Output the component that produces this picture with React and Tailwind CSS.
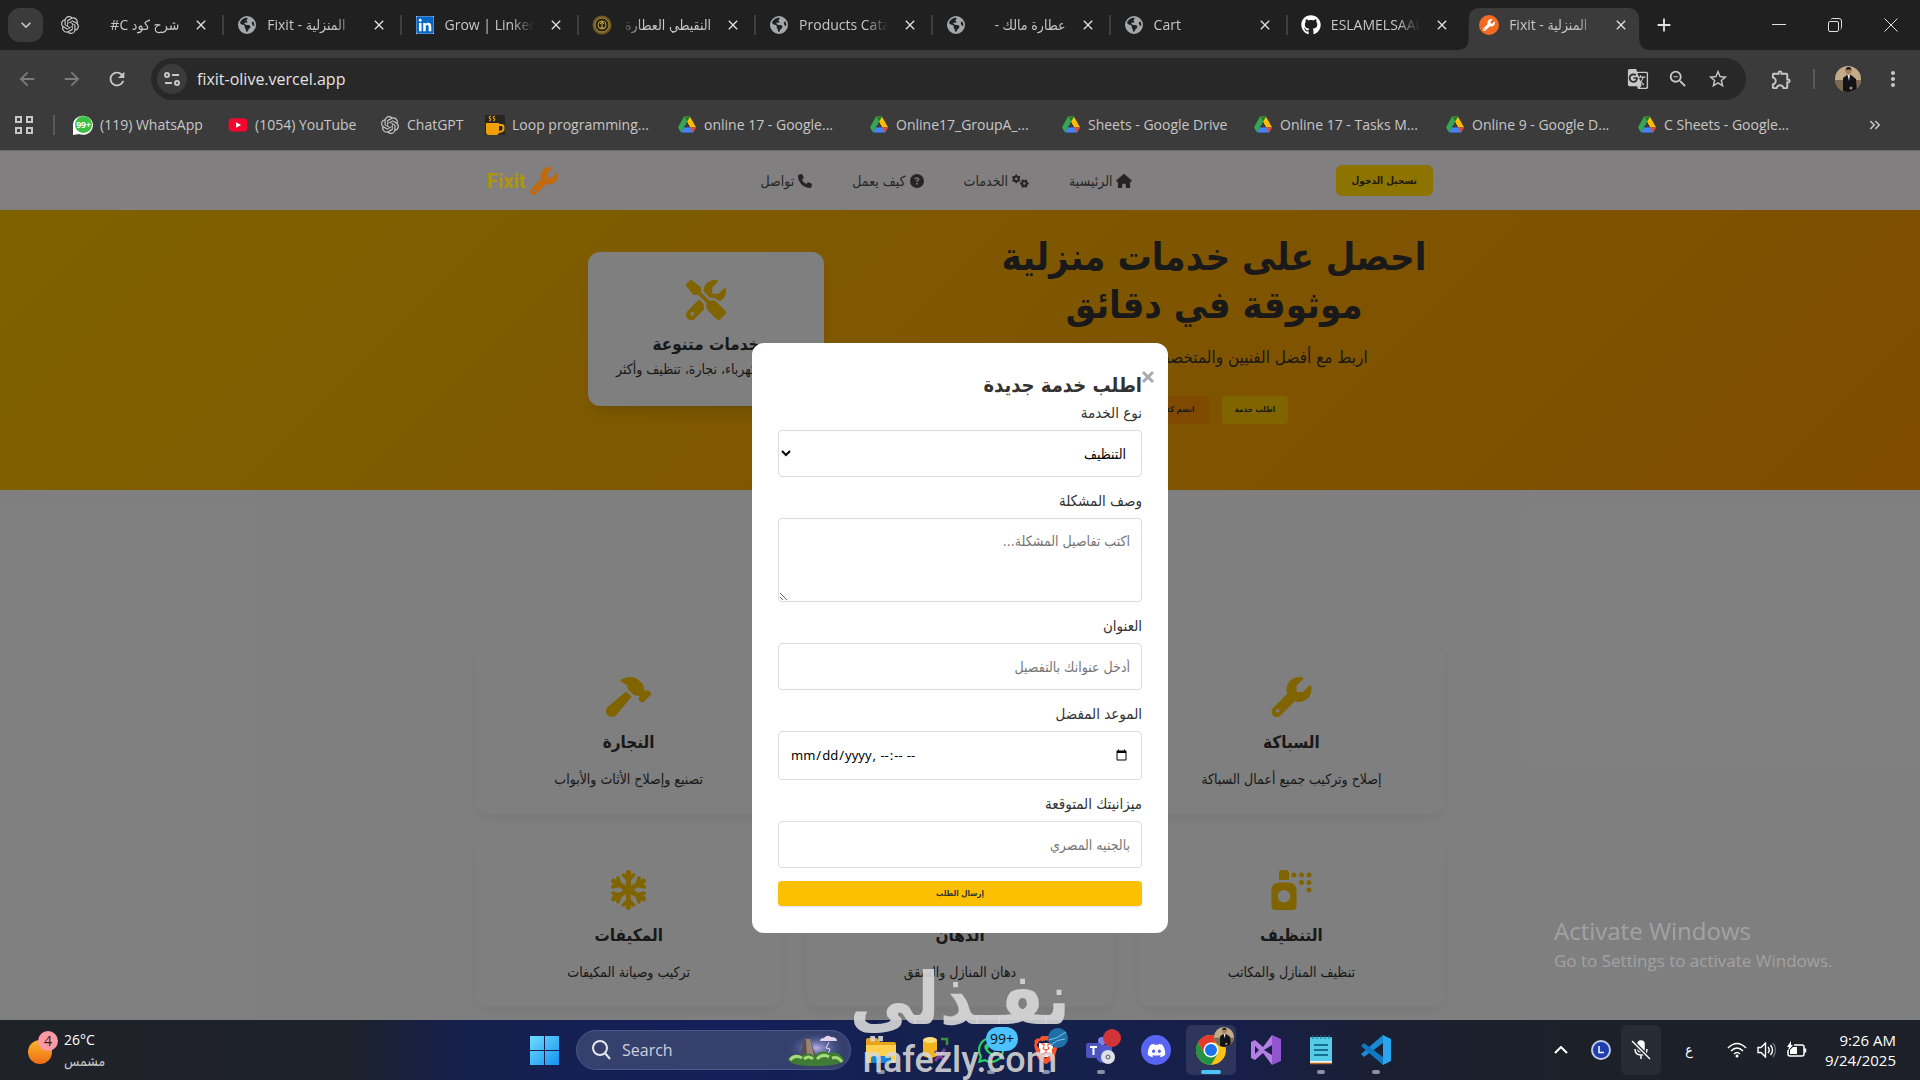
import React from 'react'
import {
    FaWrench,
    FaHammer,
    FaSnowflake,
    FaSprayCan,
    FaPaintRoller,
    FaBolt,
    FaScrewdriverWrench,
    FaPhone,
    FaCircleQuestion,
    FaGears,
    FaHouse,
    FaGithub,
    FaEarthAmericas,
    FaLinkedin,
    FaWhatsapp,
    FaDiscord,
    FaYoutube,
} from 'react-icons/fa6'
import { SiOpenai, SiBrave } from 'react-icons/si'
import {
    MdGTranslate,
    MdZoomOut,
    MdStarBorder,
    MdOutlineExtension,
    MdMoreVert,
    MdArrowBack,
    MdArrowForward,
    MdRefresh,
    MdClose,
    MdAdd,
    MdExpandMore,
    MdKeyboardDoubleArrowRight,
} from 'react-icons/md'

const uiFont = "font-['Open_Sans','DejaVu_Sans_Condensed','DejaVu_Sans',sans-serif]"
const pageFont = "font-['DejaVu_Sans_Condensed','DejaVu_Sans',sans-serif]"

function DriveIcon() {
    return (
        <svg viewBox="0 0 24 22" className="h-[18px] w-[18px]">
            <path d="M8 0h8L8.500 13.500 4 21 0 14z" fill="#34a853" />
            <path d="M8 0h8l8 14h-8z" fill="#fbbc04" />
            <path d="M8 0h8l-4 7z" fill="#188038" />
            <path d="M4.500 21 8 14h16l-4 7z" fill="#4285f4" />
            <path d="M16 14h8l-4 7z" fill="#ea4335" />
            <path d="m12 7 4 7H8z" fill="#3c3b3c" />
        </svg>
    )
}

function GoldIcon() {
    return (
        <svg viewBox="0 0 20 20" className="h-5 w-5">
            <circle cx="10" cy="10" r="9.500" fill="#6e5a22" />
            <circle cx="10" cy="10" r="7" fill="#2b2510" stroke="#a58a3c" />
            <circle cx="10" cy="10" r="4" fill="none" stroke="#b99b45" />
            <path d="M10 6v7M8 9l2-2 2 2M7.500 13h5" stroke="#c9aa50" fill="none" />
        </svg>
    )
}

function LoopIcon() {
    return (
        <svg viewBox="0 0 20 20" className="h-5 w-5">
            <rect width="20" height="20" fill="#262523" />
            <path d="M1 8h13v9q0 3-3 3H4q-3 0-3-3z" fill="#f29f05" />
            <path d="M14 10h2.500q2 0 2 2v2q0 2.500-4.500 3" fill="none" stroke="#f29f05" strokeWidth="2" />
            <path d="M6 1q-3 1-1 2.500T4 6M10 1q-3 1-1 2.500T8 6" fill="none" stroke="#f29f05" strokeWidth="1.200" />
        </svg>
    )
}

function WhatsBadge() {
    return (
        <svg viewBox="0 0 20 20" className="h-5 w-5">
            <path d="M0 20V9a10 9.500 0 1 1 6 10z" fill="#fff" />
            <circle cx="10.500" cy="9.500" r="8.500" fill="#3bbf45" />
            <text x="10.500" y="13" fontSize="8.500" fontWeight="700" textAnchor="middle" fill="#fff">99+</text>
        </svg>
    )
}

function FixitIcon() {
    return (
        <span className="flex h-5 w-5 items-center justify-center rounded-full bg-[#f26b21] text-white">
            <FaWrench size={12} />
        </span>
    )
}

function LinkedinIcon() {
    return (
        <span className="flex h-[18px] w-[18px] items-center justify-center bg-white text-[#0a66c2]">
            <FaLinkedin size={20} className="shrink-0" />
        </span>
    )
}

function Avatar({ className }) {
    return (
        <svg viewBox="0 0 26 26" className={className}>
            <defs>
                <clipPath id="avatarClip">
                    <circle cx="13" cy="13" r="13" />
                </clipPath>
            </defs>
            <g clipPath="url(#avatarClip)">
                <rect width="26" height="26" fill="#c2ab86" />
                <rect y="14" width="26" height="12" fill="#7c6a50" />
                <path d="M8 26V12l4-3h4l5 4 1 13z" fill="#121318" />
                <path d="m12.500 9 1.500 6 1-6z" fill="#e8e6e2" />
                <circle cx="13.500" cy="5.500" r="2.800" fill="#a87c5c" />
                <path d="M10.500 5q0-4 3-4t3 4l-1-1.500h-4z" fill="#1b1714" />
                <circle cx="16" cy="22" r="1.500" fill="#b98a68" />
            </g>
        </svg>
    )
}

const tabs = [
    { title: 'شرح كود C#', icon: <SiOpenai size={18} />, right: true },
    { title: 'Fixit - المنزلية', icon: <FaEarthAmericas size={18} className="text-[#a5a7a9]" /> },
    { title: 'Grow | LinkedIn', icon: <LinkedinIcon /> },
    { title: 'النقيطي العطارة', icon: <GoldIcon />, right: true },
    { title: 'Products Catalog', icon: <FaEarthAmericas size={18} className="text-[#a5a7a9]" /> },
    { title: 'عطارة مالك -', icon: <FaEarthAmericas size={18} className="text-[#a5a7a9]" />, right: true },
    { title: 'Cart', icon: <FaEarthAmericas size={18} className="text-[#a5a7a9]" /> },
    { title: 'ESLAMELSAADANY', icon: <FaGithub size={20} className="text-white" /> },
    { title: 'Fixit - المنزلية', icon: <FixitIcon />, active: true },
]

const bookmarks = [
    { title: '(119) WhatsApp', icon: <WhatsBadge />, width: 'w-[155px]' },
    { title: '(1054) YouTube', icon: <FaYoutube size={20} className="bg-[linear-gradient(#fff,#fff)] bg-[length:8px_8px] bg-center bg-no-repeat text-[#f5062f]" />, width: 'w-[152px]' },
    { title: 'ChatGPT', icon: <SiOpenai size={18} />, width: 'w-[105px]' },
    { title: 'Loop programming...', icon: <LoopIcon />, width: 'w-[192px]' },
    { title: 'online 17 - Google...', icon: <DriveIcon />, width: 'w-[192px]' },
    { title: 'Online17_GroupA_...', icon: <DriveIcon />, width: 'w-[192px]' },
    { title: 'Sheets - Google Drive', icon: <DriveIcon />, width: 'w-[192px]' },
    { title: 'Online 17 - Tasks M...', icon: <DriveIcon />, width: 'w-[192px]' },
    { title: 'Online 9 - Google D...', icon: <DriveIcon />, width: 'w-[192px]' },
    { title: 'C Sheets - Google...', icon: <DriveIcon />, width: 'w-[192px]' },
]

function TabStrip() {
    return (
        <div className="flex h-[50px] bg-[#202020] pl-2 pt-2 text-[#c7c7c7]">
            <button aria-label="Search tabs" className="flex h-[34px] w-[35px] items-center justify-center rounded-xl bg-[#3c3b3c]">
                <MdExpandMore size={20} />
            </button>
            <div className="ml-1 flex min-w-0 flex-1">
                {tabs.map((tab, i) => (
                    <div key={i} className={tab.active ? 'relative flex h-[42px] min-w-0 flex-[69] px-1' : 'flex h-[34px] min-w-0 flex-[72] items-center'}>
                        {tab.active && (
                            <svg viewBox="0 0 198 42" preserveAspectRatio="none" className="absolute -left-2 top-0 h-full w-[calc(100%+16px)]">
                                <path d="M0 42q12 0 12-12V12Q12 0 24 0h150q12 0 12 12v18q0 12 12 12z" fill="#3c3b3c" />
                            </svg>
                        )}
                        <div className={tab.active ? 'relative flex h-[34px] min-w-0 flex-1 items-center pl-[10px]' : 'flex min-w-0 flex-1 items-center pl-[13px] pr-[3px]'}>
                            <span className="flex w-5 shrink-0 justify-center">{tab.icon}</span>
                            <span
                                dir={tab.right ? 'rtl' : 'ltr'}
                                className={
                                    tab.right
                                        ? 'ml-2 min-w-0 flex-1 overflow-hidden whitespace-nowrap text-sm [mask-image:linear-gradient(to_left,black_75%,transparent)]'
                                        : 'ml-[10px] min-w-0 flex-1 overflow-hidden whitespace-nowrap text-sm [mask-image:linear-gradient(to_right,black_75%,transparent)]'
                                }
                            >
                                {tab.title}
                            </span>
                            <button aria-label="Close tab" className="ml-3 mr-2 flex w-5 shrink-0 justify-center text-[#e0e0e0]">
                                <MdClose size={16} />
                            </button>
                        </div>
                        {!tab.active && <span className={i === tabs.length - 2 ? 'h-5 w-0.5' : 'h-5 w-0.5 bg-[#3f3f3f]'}></span>}
                    </div>
                ))}
            </div>
            <div className="flex h-[34px] w-[277px] items-center justify-between pl-[10px] pr-[22px] text-[#e0e0e0]">
                <button aria-label="New tab"><MdAdd size={22} /></button>
                <div className="flex items-center gap-[42px]">
                    <button aria-label="Minimize">
                        <svg viewBox="0 0 14 14" className="h-[14px] w-[14px]" stroke="currentColor"><path d="M0 6.500h14" /></svg>
                    </button>
                    <button aria-label="Restore">
                        <svg viewBox="0 0 14 14" className="h-[14px] w-[14px]" stroke="currentColor" fill="none">
                            <rect x=".5" y="3.500" width="10" height="10" rx="1.500" />
                            <path d="M3 1.500q.5-1 1.500-1H11q2.500 0 2.500 2.500v6.500q0 1-1 1.500" />
                        </svg>
                    </button>
                    <button aria-label="Close window">
                        <svg viewBox="0 0 14 14" className="h-[14px] w-[14px]" stroke="currentColor"><path d="m.5.5 13 13m0-13-13 13" /></svg>
                    </button>
                </div>
            </div>
        </div>
    )
}

function Toolbar() {
    return (
        <div className="flex h-[50px] items-center bg-[#3c3b3c] pt-2 text-[#c7c7c7]">
            <div className="flex w-[151px] items-center gap-[23px] pl-4">
                <button aria-label="Back" className="text-[#7b7b7b]"><MdArrowBack size={22} /></button>
                <button aria-label="Forward" className="text-[#7b7b7b]"><MdArrowForward size={22} /></button>
                <button aria-label="Reload"><MdRefresh size={22} /></button>
            </div>
            <div className="flex h-[42px] flex-1 items-center rounded-full bg-[#282829] pl-[6px] pr-[17px]">
                <button aria-label="View site information" className="flex h-[30px] w-[30px] items-center justify-center rounded-full bg-[#3c3b3c]">
                    <svg viewBox="0 0 16 16" className="h-4 w-4" fill="none" stroke="currentColor" strokeWidth="2">
                        <circle cx="3" cy="4" r="2" />
                        <path d="M8 4h7M1 12h7" />
                        <circle cx="13" cy="12" r="2" />
                    </svg>
                </button>
                <input
                    aria-label="Address"
                    defaultValue="fixit-olive.vercel.app"
                    className="ml-[10px] min-w-0 flex-1 bg-transparent text-base text-[#e3e3e3] outline-none"
                />
                <div className="flex items-center gap-[18px]">
                    <button aria-label="Translate"><MdGTranslate size={22} /></button>
                    <button aria-label="Zoom"><MdZoomOut size={22} /></button>
                    <button aria-label="Bookmark"><MdStarBorder size={22} /></button>
                </div>
            </div>
            <div className="flex w-[174px] items-center pl-6">
                <button aria-label="Extensions"><MdOutlineExtension size={23} /></button>
                <span className="ml-5 h-5 w-0.5 bg-[#5b5a5b]"></span>
                <button aria-label="Profile" className="ml-5"><Avatar className="h-[26px] w-[26px]" /></button>
                <button aria-label="Menu" className="ml-5"><MdMoreVert size={24} /></button>
            </div>
        </div>
    )
}

function Bookmarks() {
    return (
        <div className="flex h-[51px] items-center border-b border-[#6b6a6b] bg-[#3c3b3c] text-sm text-[#c7c7c7]">
            <button aria-label="Apps" className="ml-[15px]">
                <svg viewBox="0 0 18 18" className="h-[18px] w-[18px]" fill="none" stroke="currentColor" strokeWidth="2">
                    <path d="M1 1h5v5H1zM12 1h5v5h-5zM1 12h5v5H1zM12 12h5v5h-5z" />
                </svg>
            </button>
            <span className="ml-5 mr-[18px] h-5 w-0.5 bg-[#5b5a5b]"></span>
            <nav className="flex min-w-0 flex-1 overflow-hidden">
                {bookmarks.map(item => (
                    <a key={item.title} href="#" className={`flex shrink-0 items-center gap-[7px] whitespace-nowrap ${item.width}`}>
                        <span className="flex w-5 shrink-0 justify-center">{item.icon}</span>
                        {item.title}
                    </a>
                ))}
            </nav>
            <button aria-label="More bookmarks" className="mr-9"><MdKeyboardDoubleArrowRight size={18} /></button>
        </div>
    )
}

const links = [
    { title: 'الرئيسية', icon: <FaHouse className="h-[14px] w-4" /> },
    { title: 'الخدمات', icon: <FaGears className="h-[14px] w-[17px]" /> },
    { title: 'كيف يعمل', icon: <FaCircleQuestion className="h-[14px] w-[14px]" /> },
    { title: 'تواصل', icon: <FaPhone className="h-[14px] w-[14px]" /> },
]

const services = [
    { title: 'السباكة', text: 'إصلاح وتركيب جميع أعمال السباكة', Icon: FaWrench },
    { title: 'الكهرباء', text: 'صيانة وتركيب الكهرباء', Icon: FaBolt },
    { title: 'النجارة', text: 'تصنيع وإصلاح الأثاث والأبواب', Icon: FaHammer },
    { title: 'التنظيف', text: 'تنظيف المنازل والمكاتب', Icon: FaSprayCan },
    { title: 'الدهان', text: 'دهان المنازل والشقق', Icon: FaPaintRoller },
    { title: 'المكيفات', text: 'تركيب وصيانة المكيفات', Icon: FaSnowflake },
]

function Site() {
    return (
        <div dir="rtl" className="text-[#333]">
            <header className="relative z-20 bg-[#817f80]">
                <div className="mx-auto flex h-[59px] max-w-[960px] items-center justify-between px-[7px]">
                    <button className="h-[31px] rounded-md bg-[#8d7400] px-4 text-[10px] font-bold text-[#1c1a10]">تسجيل الدخول</button>
                    <nav className="flex gap-10 text-sm text-[#262526]">
                        {links.map(link => (
                            <a key={link.title} href="#" className="flex items-center gap-1">
                                {link.icon}
                                {link.title}
                            </a>
                        ))}
                    </nav>
                    <a href="#" className="flex items-center gap-1 font-['Roboto',sans-serif] text-xl font-bold text-[#b3950c]">
                        <FaWrench size={28} className="text-[#c06a10]" />
                        Fixit
                    </a>
                </div>
            </header>

            <section className="bg-[linear-gradient(135deg,#ffc400,#ff9800)] pb-[66px] pt-[23px]">
                <div className="mx-auto grid max-w-[960px] grid-cols-2 items-center gap-14">
                    <div className="text-center">
                        <h1 className="whitespace-nowrap text-[38px] font-bold leading-[48px]">
                            احصل على خدمات منزلية
                            <br />
                            موثوقة في دقائق
                        </h1>
                        <p className="mt-[14px] text-[17px] leading-7">اربط مع أفضل الفنيين والمتخصصين في منطقتك</p>
                        <div className="mt-[25px] flex justify-center gap-[13px] text-[8px] font-bold">
                            <button className="h-7 w-[66px] rounded bg-[#ffc800]">اطلب خدمة</button>
                            <button className="h-7 w-[69px] rounded bg-[#ff9200]">انضم كفني</button>
                        </div>
                    </div>
                    <div className="mx-auto rounded-xl bg-white px-7 pb-7 pt-7 text-center shadow-lg">
                        <FaScrewdriverWrench className="mx-auto h-10 w-10 text-[#ffc800]" />
                        <h3 className="mt-2 text-[17px] font-bold leading-8">خدمات متنوعة</h3>
                        <p className="text-sm leading-[18px]">سباكة، كهرباء، نجارة، تنظيف وأكثر</p>
                    </div>
                </div>
            </section>

            <section className="pt-[157px]">
                <div className="mx-auto grid max-w-[968px] grid-cols-3 gap-[26px]">
                    {services.map(({ title, text, Icon }) => (
                        <div key={title} className="rounded-xl bg-white px-[26px] pb-[23px] pt-[30px] text-center shadow-[0_4px_12px_rgba(0,0,0,0.06)]">
                            <Icon className="mx-auto h-10 w-[45px] text-[#ffc800]" />
                            <h3 className="mt-2 text-[17px] font-bold leading-[34px]">{title}</h3>
                            <p className="mt-2 text-sm leading-6">{text}</p>
                        </div>
                    ))}
                </div>
            </section>
        </div>
    )
}

const label = 'mb-[6px] block text-[15px] leading-[22px]'
const field = 'mb-[13px] block w-full rounded border border-[#ddd] bg-white px-[11px] text-sm text-black placeholder:text-[#757575]'

function RequestModal() {
    return (
        <div className="absolute inset-0 z-10 bg-black/50">
            <div role="dialog" dir="rtl" className="relative mx-auto mt-48 w-[416px] max-w-full rounded-xl bg-white px-[26px] pb-[27px] pt-[26px] text-[#333]">
                <button aria-label="إغلاق" className="absolute right-[11px] top-[25px] text-[#aaa]">
                    <svg viewBox="0 0 18 18" className="h-[18px] w-[18px]" stroke="currentColor" strokeWidth="3"><path d="m4 4 10 10m0-10L4 14" /></svg>
                </button>
                <h2 className="text-xl font-bold leading-[33px]">اطلب خدمة جديدة</h2>
                <form>
                    <label htmlFor="service" className={label}>نوع الخدمة</label>
                    <select id="service" className={`${field} h-[47px]`}>
                        <option>التنظيف</option>
                    </select>

                    <label htmlFor="problem" className={label}>وصف المشكلة</label>
                    <textarea id="problem" placeholder="اكتب تفاصيل المشكلة..." className={`${field} h-[84px] resize py-3`} />

                    <label htmlFor="address" className={label}>العنوان</label>
                    <input id="address" type="text" placeholder="أدخل عنوانك بالتفصيل" className={`${field} h-[47px]`} />

                    <label htmlFor="date" className={label}>الموعد المفضل</label>
                    <input id="date" type="datetime-local" dir="ltr" className="mb-[13px] block h-[49px] w-full rounded border border-[#ddd] bg-white px-[11px] font-['Noto_Sans',sans-serif] text-[13px] text-black" />

                    <label htmlFor="budget" className={label}>ميزانيتك المتوقعة</label>
                    <input id="budget" type="text" placeholder="بالجنيه المصري" className={`${field} h-[47px]`} />

                    <button type="button" className="block h-[25px] w-full rounded bg-[#fbc002] text-[8px] font-bold shadow-sm">إرسال الطلب</button>
                </form>
            </div>
        </div>
    )
}

function FolderIcon() {
    return (
        <svg viewBox="0 0 30 30" className="h-[30px] w-[30px]">
            <path d="M0 5q0-2 2-2h9l3 4h14q2 0 2 2v10H0z" fill="#e8a317" />
            <path d="M0 10h30v16q0 2-2 2H2q-2 0-2-2z" fill="#ffd04f" />
            <path d="M5 28v-4q0-3 3-3h14q3 0 3 3v4z" fill="#1c84d6" />
        </svg>
    )
}

function DatabaseIcon() {
    return (
        <svg viewBox="0 0 30 30" className="h-[30px] w-[30px]">
            <path d="M2 5v16q7 4 14 0V5z" fill="#f2b31f" />
            <ellipse cx="9" cy="5" rx="7" ry="3" fill="#ffdf7d" />
            <path d="M20 4h6v6" fill="none" stroke="#3f8f3c" strokeWidth="2.500" />
            <path d="m14 16 10 10m-10 0 10-12M21 28l6-6" stroke="#7d3f98" strokeWidth="3" />
        </svg>
    )
}

function TeamsIcon() {
    return (
        <svg viewBox="0 0 30 30" className="h-[30px] w-[30px] overflow-visible">
            <circle cx="16" cy="6" r="4" fill="#7b83eb" />
            <path d="M10 10h16v12q-2 6-8 6t-8-6z" fill="#5059c9" />
            <rect y="8" width="15" height="15" rx="2" fill="#4b53bc" />
            <path d="M4 12h7M7.500 12v8" stroke="#fff" strokeWidth="2" />
            <circle cx="22" cy="22" r="7" fill="#dfe0ea" />
            <circle cx="22" cy="22" r="2" fill="none" stroke="#555" />
            <circle cx="26" cy="3" r="9" fill="#d13438" />
        </svg>
    )
}

function ChromeIcon() {
    return (
        <svg viewBox="0 0 30 30" className="h-[30px] w-[30px]">
            <circle cx="15" cy="15" r="15" fill="#fbc116" />
            <path d="M2 7.500A15 15 0 0 1 28 7.500H15L8.500 18.700z" fill="#e33b2e" />
            <path d="M2 7.500A15 15 0 0 0 15 30l6.500-11.300H8.500z" fill="#229342" />
            <circle cx="15" cy="15" r="7.500" fill="#fff" />
            <circle cx="15" cy="15" r="6" fill="#1a73e8" />
        </svg>
    )
}

function VisualStudioIcon() {
    return (
        <svg viewBox="0 0 30 30" className="h-[30px] w-[30px]">
            <path d="m4 5 8 7 9-12v10l-8 5 8 5v10L12 18l-8 7-4-2V7z" fill="#b27ee3" />
            <path d="M4 11v8l4-4z" fill="#1a2049" />
            <path d="m21 0 9 4v22l-9 4z" fill="#9355cf" />
        </svg>
    )
}

function NotepadIcon() {
    return (
        <svg viewBox="0 0 30 30" className="h-[30px] w-[30px]">
            <rect x="4" y="2" width="22" height="25" rx="1" fill="#55cbe6" />
            <path d="M4 26h22v3H4z" fill="#f3f3f3" />
            <path d="M4 28.500h22" stroke="#b36b1f" strokeWidth="1.500" />
            <path d="M8 10h14M8 15h14M8 20h14" stroke="#16708f" strokeWidth="2" />
            <path d="M7 0v4M11 0v4M15 0v4M19 0v4M23 0v4" stroke="#16708f" />
        </svg>
    )
}

function VsCodeIcon() {
    return (
        <svg viewBox="0 0 30 30" className="h-[30px] w-[30px]">
            <path d="M22 0 0 19l3 3L22 8z" fill="#1b8ad3" />
            <path d="M22 30 0 11l3-3 19 14z" fill="#0f78c0" />
            <path d="m22 0 8 4v22l-8 4z" fill="#2aa5f0" />
        </svg>
    )
}

function WhatsappTask() {
    return (
        <span className="relative text-[#25d366]">
            <FaWhatsapp size={30} />
            <span className="absolute -top-2 left-[10px] rounded-full bg-[#4cc2ff] px-1 text-sm leading-6 text-[#101010]">99+</span>
        </span>
    )
}

function BraveTask() {
    return (
        <span className="relative text-[#fb542b]">
            <span className="absolute inset-[7px] bg-white"></span>
            <SiBrave size={28} className="relative" />
            <svg viewBox="0 0 20 20" className="absolute -right-2 -top-2 h-5 w-5">
                <circle cx="10" cy="10" r="10" fill="#1f6fa8" />
                <path d="M1 12q8-1 17-8M3 17q6-6 14-6" stroke="#7fc4ea" fill="none" />
            </svg>
        </span>
    )
}

function ChromeTask() {
    return (
        <span className="relative">
            <ChromeIcon />
            <Avatar className="absolute -right-2 -top-2 h-5 w-5" />
        </span>
    )
}

const apps = [
    { name: 'File Explorer', icon: <FolderIcon />, open: true },
    { name: 'SQL Server', icon: <DatabaseIcon /> },
    { name: 'WhatsApp', icon: <WhatsappTask />, open: true },
    { name: 'Brave', icon: <BraveTask />, open: true },
    { name: 'Teams', icon: <TeamsIcon />, open: true },
    { name: 'Discord', icon: <span className="flex h-[30px] w-[30px] items-center justify-center rounded-full bg-[#5865f2] text-white"><FaDiscord size={19} /></span> },
    { name: 'Chrome', icon: <ChromeTask />, active: true },
    { name: 'Visual Studio', icon: <VisualStudioIcon /> },
    { name: 'Notepad', icon: <NotepadIcon />, open: true },
    { name: 'VS Code', icon: <VsCodeIcon />, open: true },
]

function SearchArt() {
    return (
        <svg viewBox="0 0 60 32" className="h-8 w-[60px]">
            <defs>
                <radialGradient id="sky">
                    <stop offset="0" stopColor="#b9b6ea" />
                    <stop offset="1" stopColor="#2f3d85" stopOpacity="0" />
                </radialGradient>
            </defs>
            <ellipse cx="30" cy="14" rx="30" ry="16" fill="url(#sky)" />
            <path d="M13 26 18 5q3-3 6 0l7 21z" fill="#54504e" />
            <path d="m20 5 1 20h8L24 5z" fill="#9b8378" />
            <path d="M34 7q0-3 4-3 3-4 7-1 6 0 6 4z" fill="#e3d3ee" />
            <path d="m43 8-3 6 4 1-3 8" stroke="#e6d8ff" fill="none" />
            <path d="M2 26q4-8 13-4 8-5 14 0 6-7 14-3 10-3 15 7-4 6-28 6T2 26z" fill="#3f7a36" />
            <path d="M4 26q5-6 12-2M18 25q5-4 9 0M31 25q6-6 12-2M46 24q6-2 10 4" stroke="#a5da77" strokeWidth="3" fill="none" />
        </svg>
    )
}

function Taskbar() {
    return (
        <footer className="flex h-[60px] items-center bg-[linear-gradient(to_right,#1f2229_0%,#1e222b_18%,#15204d_24%,#151f5a_38%,#15214c_50%,#161f4a_64%,#1c1f30_73%,#1c2129_82%,#1d2029_100%)] text-white">
            <div className="flex w-[530px] items-center pl-7">
                <span className="relative h-7 w-9">
                    <span className="absolute bottom-0 left-0 h-6 w-6 rounded-full bg-gradient-to-b from-[#f8b62c] to-[#ee6a14]"></span>
                    <span className="absolute -top-[5px] left-[10px] flex h-5 w-5 items-center justify-center rounded-full bg-[#ff99a4] text-sm text-[#222]">4</span>
                </span>
                <div className="text-sm leading-[22px]">
                    <div>26°C</div>
                    <div className="leading-5 text-[#c9c9c9]">مشمس</div>
                </div>
            </div>
            <button aria-label="Start">
                <svg viewBox="0 0 29 29" className="h-[29px] w-[29px]">
                    <defs>
                        <linearGradient id="win" x1="0" y1="0" x2="1" y2="1">
                            <stop offset="0" stopColor="#6fdcff" />
                            <stop offset="1" stopColor="#1592f0" />
                        </linearGradient>
                    </defs>
                    <path d="M0 0h14v14H0zM15 0h14v14H15zM0 15h14v14H0zM15 15h14v14H15z" fill="url(#win)" />
                </svg>
            </button>
            <label className="ml-[17px] flex h-10 w-[275px] items-center rounded-full border border-[#4a5688] bg-[#35406c] pl-[14px] pr-1">
                <svg viewBox="0 0 20 20" className="h-5 w-5 shrink-0" fill="none" stroke="#e4e6ef" strokeWidth="2">
                    <circle cx="9" cy="8" r="7" />
                    <path d="m14 13 5 6" />
                </svg>
                <input aria-label="Search" placeholder="Search" className="ml-[11px] min-w-0 flex-1 bg-transparent text-base outline-none placeholder:text-[#cdd1df]" />
                <SearchArt />
            </label>
            <div className="ml-[5px] flex gap-[5px]">
                {apps.map(app => (
                    <button
                        key={app.name}
                        aria-label={app.name}
                        className={`relative flex h-[50px] w-[50px] items-center justify-center rounded-md ${app.active ? 'bg-white/10' : ''}`}
                    >
                        {app.icon}
                        {app.open && <span className="absolute bottom-[1px] h-1 w-2 rounded-full bg-[#8d90a5]"></span>}
                        {app.active && <span className="absolute bottom-[1px] h-1 w-5 rounded-full bg-[#4cc2ff]"></span>}
                    </button>
                ))}
            </div>
            <div className="ml-auto flex items-center pr-6">
                <button aria-label="Hidden icons">
                    <svg viewBox="0 0 14 8" className="h-2 w-[14px]" fill="none" stroke="#fff" strokeWidth="2"><path d="m1 7 6-6 6 6" /></svg>
                </button>
                <span className="ml-[23px] flex h-5 w-5 items-center justify-center rounded-full border-2 border-[#c3cbe8] bg-[#1d3fae]">
                    <svg viewBox="0 0 8 8" className="h-2 w-2" fill="none" stroke="#fff" strokeWidth="1.500"><path d="M2 0v6.500h5" /></svg>
                </span>
                <span className="ml-[10px] flex h-[50px] w-10 items-center justify-center rounded-md bg-white/5">
                    <svg viewBox="0 0 20 20" className="h-5 w-5" fill="none" stroke="#fff" strokeWidth="1.500">
                        <rect x="7" y="1" width="6" height="11" rx="3" fill="#fff" />
                        <path d="M4 9q0 6 6 6t6-6M10 15v4" />
                        <path d="m1 1 18 18" stroke="#282b33" strokeWidth="4" />
                        <path d="m1 1 18 18" />
                    </svg>
                </span>
                <span className="ml-5 w-4 text-center text-sm">ع</span>
                <svg viewBox="0 0 20 16" className="ml-[30px] h-4 w-5" fill="none" stroke="#fff" strokeWidth="1.600">
                    <path d="M1 6q9-9 18 0M4 9q6-6 12 0M7 12q3-3 6 0" />
                    <circle cx="10" cy="14" r="1.500" fill="#fff" stroke="none" />
                </svg>
                <svg viewBox="0 0 20 16" className="ml-[10px] h-4 w-5" fill="none" stroke="#fff" strokeWidth="1.400">
                    <path d="M1 5.500h3L8.500 1v14L4 10.500H1zM11 5q2.500 3 0 6M13.500 3q4 5 0 10" />
                    <path d="M16 1q5 7 0 14" stroke="#6a6d75" />
                </svg>
                <svg viewBox="0 0 20 18" className="ml-[10px] h-[18px] w-5" fill="none" stroke="#fff" strokeWidth="1.500">
                    <path d="M7 4h8q2 0 2 2v7q0 2-2 2H3q-2 0-2-2V9M18.500 7.500v4" />
                    <path d="M3 13V9l3-3h4v7z" fill="#fff" stroke="none" />
                    <path d="M4 0 0 6h2L1 10l5-6H4z" fill="#fff" stroke="none" />
                </svg>
                <div className="ml-[18px] text-right text-[15px] leading-5">
                    <div>9:26 AM</div>
                    <div>9/24/2025</div>
                </div>
            </div>
        </footer>
    )
}

function App() {
    return (
        <div className={`relative flex h-screen flex-col overflow-hidden ${uiFont}`}>
            <TabStrip />
            <Toolbar />
            <Bookmarks />
            <main className={`relative min-h-0 flex-1 overflow-hidden bg-white ${pageFont}`}>
                <Site />
                <RequestModal />
            </main>
            <Taskbar />

            <div className="pointer-events-none absolute bottom-[105px] right-[81px] z-30 w-[285px] whitespace-nowrap text-[#a3a2a3]">
                <p className="text-2xl leading-8">Activate Windows</p>
                <p className="text-[17px] leading-7">Go to Settings to activate Windows.</p>
            </div>
            <div className="pointer-events-none absolute bottom-0 left-1/2 z-30 flex -translate-x-1/2 flex-col items-center whitespace-nowrap text-[#d8d8d8]/90">
                <p className="mb-2 text-[72px] font-bold leading-[72px]">نفـذلي</p>
                <p className="font-['Roboto',sans-serif] text-4xl font-medium leading-10">nafezly.com</p>
            </div>
        </div>
    )
}

export default App
